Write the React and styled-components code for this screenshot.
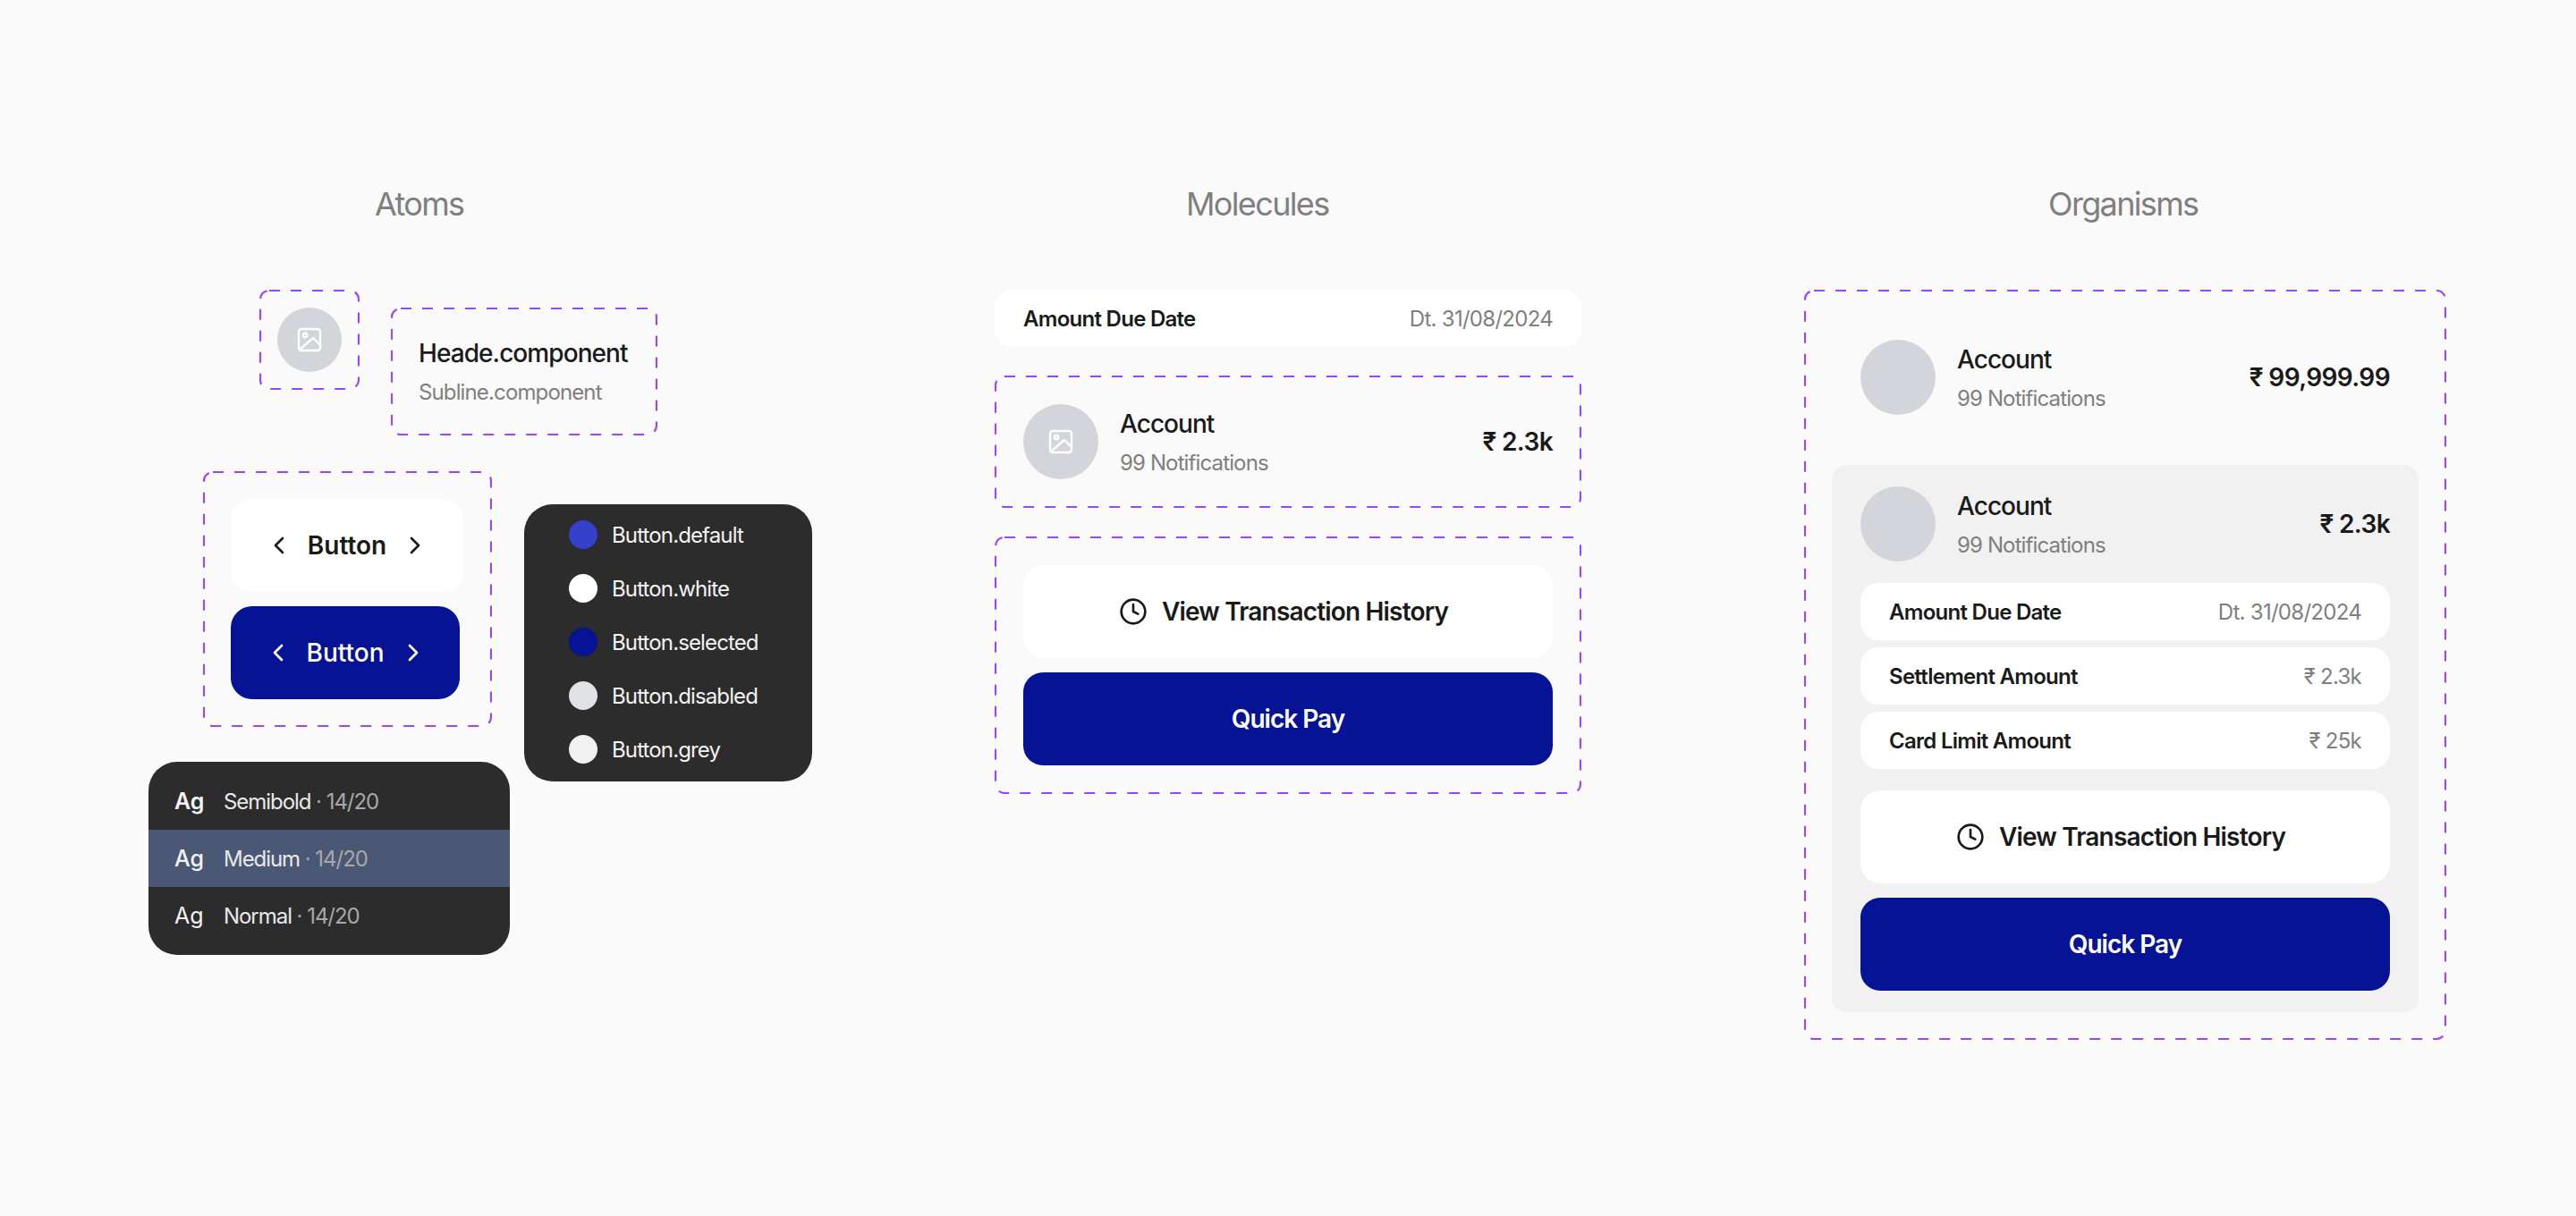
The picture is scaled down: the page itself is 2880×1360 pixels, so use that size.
import React from "react";
import styled, { createGlobalStyle } from "styled-components";
import { ChevronLeft, ChevronRight, Clock } from "lucide-react";

const GlobalStyle = createGlobalStyle`
  html, body {
    margin: 0;
    padding: 0;
    background: #fafafa;
    font-family: "Inter", "Liberation Sans", sans-serif;
  }
`;

const Page = styled.div`
  width: 2880px;
  height: 1360px;
  overflow: hidden;
  display: flex;
  padding: 206px 0 0 166px;
  box-sizing: border-box;
`;

const Column = styled.section`
  width: ${(p) => p.$width}px;
  margin-right: ${(p) => p.$gap || 0}px;
  flex-shrink: 0;
`;

const Title = styled.h2`
  margin: 0 0 74px ${(p) => p.$left}px;
  font-size: 36px;
  line-height: 44px;
  font-weight: 400;
  letter-spacing: -1.65px;
  color: #7f7f7f;
`;

// dashed outline of a figma component set
const FrameBox = styled.div`
  position: relative;
  box-sizing: border-box;
`;

const FrameLine = styled.svg`
  position: absolute;
  inset: 0;
  width: 100%;
  height: 100%;
  pointer-events: none;

  rect {
    x: 1px;
    y: 1px;
    width: calc(100% - 2px);
    height: calc(100% - 2px);
    fill: none;
    stroke: #9747ff;
    stroke-width: 2.2;
    stroke-dasharray: 12 12;
  }
`;

const Frame = ({ className, children }) => (
  <FrameBox className={className}>
    <FrameLine aria-hidden="true">
      <rect rx="10" ry="10" />
    </FrameLine>
    {children}
  </FrameBox>
);

const AtomTop = styled.div`
  display: flex;
  align-items: flex-start;
  gap: 35px;
  margin: 0 0 40px 124px;
`;

const AvatarFrame = styled(Frame)`
  padding: 20px;
`;

const TextFrame = styled(Frame)`
  margin-top: 20px;
  padding: 32px 31px;
  width: 298px;
`;

const Avatar = styled.div`
  width: ${(p) => p.$size}px;
  height: ${(p) => p.$size}px;
  border-radius: 50%;
  background: #d4d5da;
  display: flex;
  align-items: center;
  justify-content: center;
  flex-shrink: 0;
`;

const Head = styled.div`
  font-size: 28px;
  line-height: 38px;
  font-weight: 500;
  letter-spacing: -0.93px;
  color: #1a1a1a;
  white-space: nowrap;
`;

const Sub = styled.div`
  margin-top: 9px;
  font-size: 24px;
  line-height: 32px;
  letter-spacing: -0.87px;
  color: #7f7f7f;
  white-space: nowrap;
`;

const AtomBottom = styled.div`
  display: flex;
  align-items: flex-start;
  gap: 16px;
`;

const AtomLeft = styled.div`
  width: 404px;
`;

const ButtonFrame = styled(Frame)`
  margin-left: 61px;
  width: 323px;
  padding: 31px;
`;

const SmallButton = styled.div`
  height: 104px;
  width: ${(p) => (p.$primary ? 256 : 260)}px;
  margin-top: ${(p) => (p.$primary ? 16 : 0)}px;
  border-radius: 24px;
  display: flex;
  align-items: center;
  justify-content: center;
  gap: 16px;
  font-size: 28px;
  font-weight: ${(p) => (p.$primary ? 500 : 600)};
  background: ${(p) => (p.$primary ? "#051394" : "#fff")};
  color: ${(p) => (p.$primary ? "#fff" : "#1a1a1a")};
`;

const TypePanel = styled.div`
  margin-top: 39px;
  padding: 12px 0;
  background: #2c2c2c;
  border-radius: 32px;
`;

const TypeRow = styled.div`
  height: 64px;
  padding-left: 29px;
  display: flex;
  align-items: center;
  background: ${(p) => (p.$active ? "#4a5875" : "transparent")};
`;

const Ag = styled.span`
  width: 55px;
  font-size: 25px;
  font-weight: ${(p) => p.$weight};
  color: #f2f2f2;
`;

const TypeName = styled.span`
  font-size: 24px;
  letter-spacing: -1.05px;
  color: #e8e8e8;
`;

const TypeSize = styled.span`
  font-size: 24px;
  letter-spacing: -1.05px;
  color: #a8a8a8;
  white-space: pre;
`;

const SwatchPanel = styled.div`
  margin-top: 37px;
  width: 322px;
  height: 310px;
  padding: 4px 0 4px 50px;
  box-sizing: border-box;
  background: #2c2c2c;
  border-radius: 32px;
`;

const SwatchRow = styled.div`
  height: 60px;
  display: flex;
  align-items: center;
  gap: 16px;
  font-size: 24px;
  letter-spacing: -0.87px;
  color: #f2f2f2;
`;

const Dot = styled.span`
  width: 32px;
  height: 32px;
  border-radius: 50%;
  background: ${(p) => p.$color};
`;

const InfoRow = styled.div`
  height: 64px;
  padding: 0 32px;
  background: #fff;
  border-radius: 20px;
  display: flex;
  align-items: center;
  justify-content: space-between;
  font-size: 24px;
  letter-spacing: -0.72px;
`;

const InfoLabel = styled.span`
  font-weight: 600;
  color: #1a1a1a;
`;

const InfoValue = styled.span`
  color: #7f7f7f;
`;

const AccountBody = styled.div`
  display: flex;
  align-items: center;
  gap: 24px;
  padding: ${(p) => p.$pad};
`;

const AccountText = styled.div`
  flex: 1;
`;

const AccountName = styled.div`
  font-size: 28px;
  line-height: 38px;
  font-weight: 500;
  letter-spacing: -0.95px;
  color: #1a1a1a;
`;

const Amount = styled.div`
  font-size: 28px;
  font-weight: 600;
  letter-spacing: -0.6px;
  color: #1a1a1a;
`;

const MolFrame = styled(Frame)`
  margin-top: ${(p) => p.$top}px;
`;

const ActionsFrame = styled(Frame)`
  margin-top: 32px;
  padding: 32px;
`;

const BigButton = styled.div`
  height: 104px;
  box-sizing: border-box;
  margin-top: ${(p) => (p.$primary ? 16 : 0)}px;
  padding-right: ${(p) => (p.$primary ? 0 : 10)}px;
  border-radius: 22px;
  display: flex;
  align-items: center;
  justify-content: center;
  gap: 16px;
  font-size: 28px;
  font-weight: 600;
  letter-spacing: ${(p) => (p.$primary ? -1 : -0.82)}px;
  background: ${(p) => (p.$primary ? "#051394" : "#fff")};
  color: ${(p) => (p.$primary ? "#fff" : "#1a1a1a")};
`;

const OrganismFrame = styled(Frame)`
  padding: 32px 31px;
  height: 839px;
`;

const GreyPanel = styled.div`
  margin-top: 32px;
  padding: 0 32px 24px;
  background: #f1f1f1;
  border-radius: 16px;
`;

const Details = styled.div`
  display: flex;
  flex-direction: column;
  gap: 8px;
  margin: 0 0 24px;
`;

const ImageIcon = () => (
  <svg width="32" height="32" viewBox="0 0 32 32" fill="none" stroke="#fff" strokeWidth="2.4" strokeLinecap="round" strokeLinejoin="round">
    <rect x="4" y="4" width="24" height="24" rx="3" />
    <circle cx="11" cy="11" r="2.2" />
    <path d="M5 27 20 14l8 8" />
  </svg>
);

const Account = ({ pad, amount, icon }) => (
  <AccountBody $pad={pad}>
    <Avatar $size={84}>{icon && <ImageIcon />}</Avatar>
    <AccountText>
      <AccountName>Account</AccountName>
      <Sub>99 Notifications</Sub>
    </AccountText>
    <Amount>₹ {amount}</Amount>
  </AccountBody>
);

const Actions = () => (
  <>
    <BigButton>
      <Clock size={32} strokeWidth={2} />
      View Transaction History
    </BigButton>
    <BigButton $primary>Quick Pay</BigButton>
  </>
);

const swatches = [
  ["default", "#3340cc"],
  ["white", "#ffffff"],
  ["selected", "#051394"],
  ["disabled", "#e1e2e6"],
  ["grey", "#f1f1f1"],
];

const types = [
  ["Semibold", 600],
  ["Medium", 500],
  ["Normal", 400],
];

const details = [
  ["Amount Due Date", "Dt. 31/08/2024"],
  ["Settlement Amount", "₹ 2.3k"],
  ["Card Limit Amount", "₹ 25k"],
];

export default function App() {
  return (
    <Page>
      <GlobalStyle />
      <Column $width={742} $gap={204}>
        <Title $left={253}>Atoms</Title>
        <AtomTop>
          <AvatarFrame>
            <Avatar $size={72}>
              <ImageIcon />
            </Avatar>
          </AvatarFrame>
          <TextFrame>
            <Head>Heade.component</Head>
            <Sub>Subline.component</Sub>
          </TextFrame>
        </AtomTop>
        <AtomBottom>
          <AtomLeft>
            <ButtonFrame>
              <SmallButton>
                <ChevronLeft size={32} />
                Button
                <ChevronRight size={32} />
              </SmallButton>
              <SmallButton $primary>
                <ChevronLeft size={32} />
                Button
                <ChevronRight size={32} />
              </SmallButton>
            </ButtonFrame>
            <TypePanel>
              {types.map(([name, weight]) => (
                <TypeRow key={name} $active={weight === 500}>
                  <Ag $weight={weight}>Ag</Ag>
                  <TypeName>{name}</TypeName>
                  <TypeSize> · 14/20</TypeSize>
                </TypeRow>
              ))}
            </TypePanel>
          </AtomLeft>
          <SwatchPanel>
            {swatches.map(([name, color]) => (
              <SwatchRow key={name}>
                <Dot $color={color} />
                Button.{name}
              </SwatchRow>
            ))}
          </SwatchPanel>
        </AtomBottom>
      </Column>

      <Column $width={656} $gap={249}>
        <Title $left={214}>Molecules</Title>
        <InfoRow>
          <InfoLabel>Amount Due Date</InfoLabel>
          <InfoValue>Dt. 31/08/2024</InfoValue>
        </InfoRow>
        <MolFrame $top={32}>
          <Account pad="32px" amount="2.3k" icon />
        </MolFrame>
        <ActionsFrame>
          <Actions />
        </ActionsFrame>
      </Column>

      <Column $width={718}>
        <Title $left={273}>Organisms</Title>
        <OrganismFrame>
          <Account pad="24px 32px" amount="99,999.99" />
          <GreyPanel>
            <Account pad="24px 0" amount="2.3k" />
            <Details>
              {details.map(([label, value]) => (
                <InfoRow key={label}>
                  <InfoLabel>{label}</InfoLabel>
                  <InfoValue>{value}</InfoValue>
                </InfoRow>
              ))}
            </Details>
            <Actions />
          </GreyPanel>
        </OrganismFrame>
      </Column>
    </Page>
  );
}
